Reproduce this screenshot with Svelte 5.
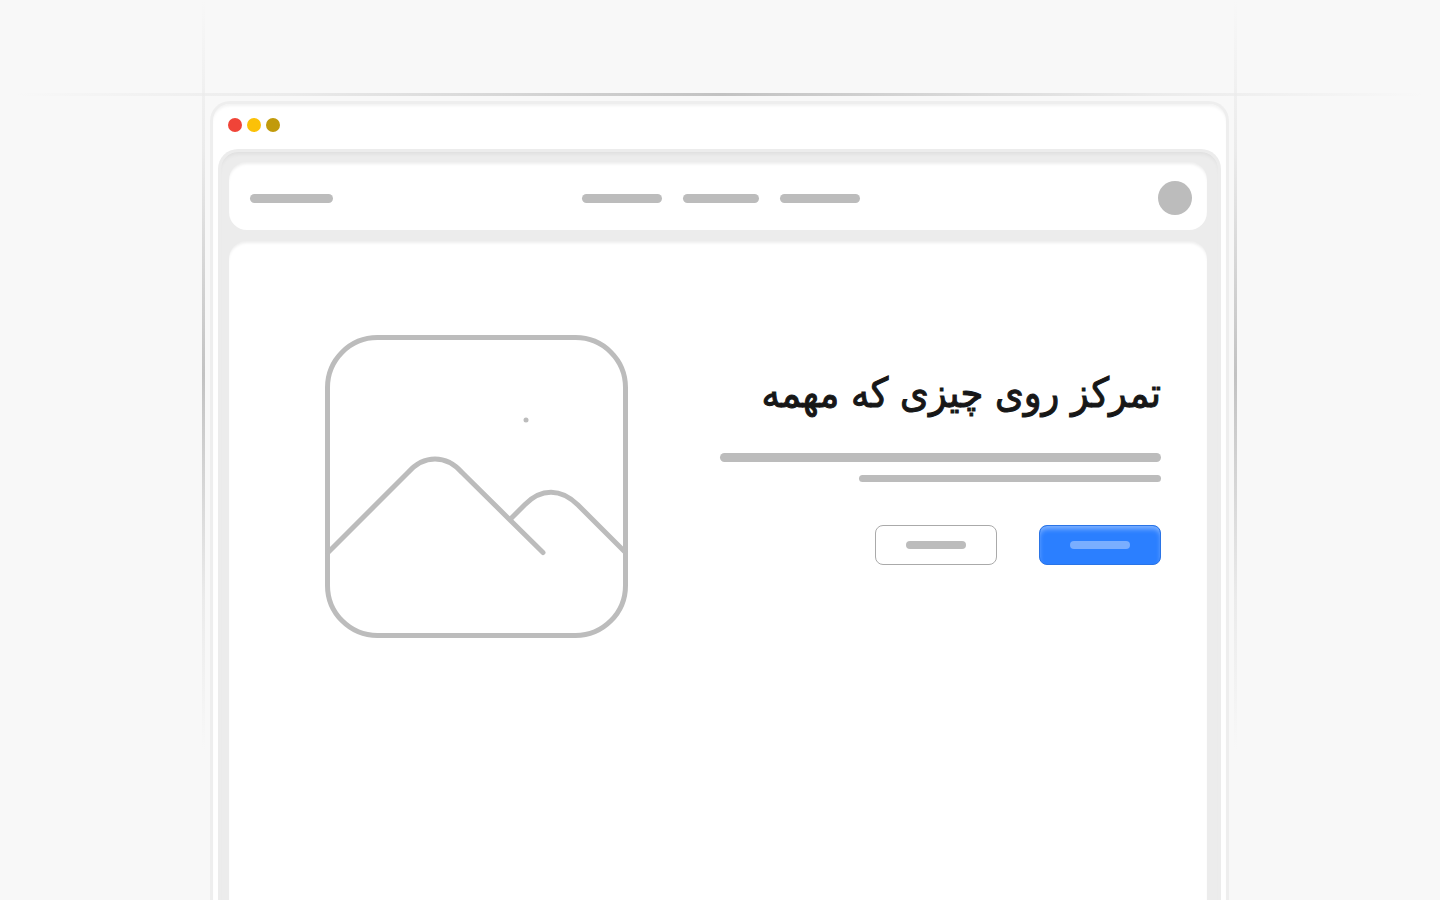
<script lang="ts">
    const dots = ["red", "yellow", "olive"];

    const links = [
        { label: "خانه", size: "wide" },
        { label: "امکانات", size: "narrow" },
        { label: "تماس", size: "wide" }
    ];
</script>

<div class="stage">
    <div class="window">
        <div class="line horizontal"></div>
        <div class="line vertical left"></div>
        <div class="line vertical right"></div>

        <div class="title-bar">
            {#each dots as dot}
                <span class="dot {dot}"></span>
            {/each}
        </div>

        <div class="screen">
            <header class="card navbar">
                <span class="bar logo"></span>
                <nav class="links">
                    {#each links as link}
                        <a class="bar {link.size}" href="#top" aria-label={link.label}></a>
                    {/each}
                </nav>
                <span class="avatar"></span>
            </header>

            <main class="card hero">
                <svg class="picture" viewBox="0 0 303 303" fill="none" stroke="#bcbcbc" stroke-width="5" stroke-linecap="round" stroke-linejoin="round" aria-hidden="true">
                    <rect x="2.5" y="2.5" width="298" height="298" rx="50" />
                    <path d="M3 217.5L83 137.5C99 119.5 121 119.5 137 137.5L218 217.5" />
                    <path d="M185.5 184L200 169.5C216 153 236 153 253 170L299.5 216.5" />
                    <circle cx="201" cy="85" r="2.5" fill="#bcbcbc" stroke="none" />
                </svg>

                <div class="content" dir="rtl">
                    <h1>تمرکز روی چیزی که مهمه</h1>
                    <div class="text">
                        <span class="bar"></span>
                        <span class="bar short"></span>
                    </div>
                    <div class="actions">
                        <button class="btn primary" aria-label="شروع"><span class="bar"></span></button>
                        <button class="btn" aria-label="بیشتر"><span class="bar"></span></button>
                    </div>
                </div>
            </main>
        </div>
    </div>
</div>

<style>
    :global(body) {
        background-color: #f8f8f8;
    }

    .stage {
        display: flex;
        height: 100vh;
        padding: 101px 211px 0 210px;
        box-sizing: border-box;
        overflow: hidden;
        background-color: #f8f8f8;
    }

    .window {
        flex: 1;
        display: flex;
        flex-direction: column;
        min-width: 0;
        position: relative;
        padding: 0 5px;
        border: 3px solid #eeeeee;
        border-bottom: none;
        border-radius: 20px 20px 0 0;
        background-color: #ffffff;
        box-shadow: inset 0 3px 3px -1px rgba(0, 0, 0, 0.05);
    }

    /* guide lines that run past the window edges */
    .line {
        position: absolute;
        pointer-events: none;
    }

    .horizontal {
        top: -11px;
        left: 50%;
        width: 100vw;
        height: 3px;
        transform: translateX(-50%);
        background: linear-gradient(90deg, transparent 1%, #ebebeb 20%, #c2c2c2 50%, #ebebeb 80%, transparent 99%);
    }

    .vertical {
        top: -104px;
        width: 3px;
        height: 750px;
        background: linear-gradient(180deg, transparent, #ebebeb 20%, #c2c2c2 50%, #ebebeb 80%, transparent);
    }

    .left {
        left: -11px;
    }

    .right {
        right: -11px;
    }

    .title-bar {
        display: flex;
        gap: 5px;
        padding: 14px 10px 17px;
    }

    .dot {
        width: 14px;
        height: 14px;
        border-radius: 50%;
    }

    .red {
        background-color: #f04438;
    }

    .yellow {
        background-color: #fbc108;
    }

    .olive {
        background-color: #c19a0b;
    }

    .screen {
        flex: 1;
        display: flex;
        flex-direction: column;
        gap: 11px;
        padding: 10px 11px 0 8px;
        border: 3px solid #ececec;
        border-bottom: none;
        border-radius: 20px 20px 0 0;
        background-color: #ececec;
        box-shadow: inset 0 4px 4px -2px rgba(0, 0, 0, 0.06);
    }

    .card {
        background-color: #ffffff;
        border-radius: 18px;
        box-shadow: inset 0 3px 3px -1px rgba(0, 0, 0, 0.07);
    }

    .navbar {
        display: grid;
        grid-template-columns: 1fr auto 1fr;
        align-items: center;
        height: 68px;
        padding: 4px 15px 0 21px;
        box-sizing: border-box;
    }

    .bar {
        display: block;
        height: 9px;
        border-radius: 5px;
        background-color: #bcbcbc;
    }

    .logo {
        width: 83px;
    }

    .links {
        display: flex;
        gap: 21px;
    }

    .wide {
        width: 80px;
    }

    .narrow {
        width: 76px;
    }

    .avatar {
        justify-self: end;
        width: 34px;
        height: 34px;
        border-radius: 50%;
        background-color: #bcbcbc;
    }

    .hero {
        flex: 1;
        display: flex;
        align-items: flex-start;
        justify-content: space-between;
        padding: 94px 46px 0 96px;
        border-radius: 18px 18px 0 0;
    }

    .picture {
        width: 303px;
        flex-shrink: 0;
    }

    .content {
        width: 441px;
        padding-top: 28px;
    }

    h1 {
        margin: 0;
        font-family: "DejaVu Sans Condensed", "DejaVu Sans", sans-serif;
        font-size: 41px;
        line-height: 60px;
        font-weight: 400;
        color: #171717;
        white-space: nowrap;
        -webkit-text-stroke: 1px #171717;
    }

    .text {
        display: flex;
        flex-direction: column;
        gap: 13px;
        padding: 30px 0 43px;
    }

    .short {
        width: 302px;
        height: 7px;
    }

    .actions {
        display: flex;
        gap: 42px;
    }

    .btn {
        display: flex;
        align-items: center;
        justify-content: center;
        width: 122px;
        height: 40px;
        padding: 0;
        border: 1px solid #aaaaaa;
        border-radius: 8px;
        background-color: #ffffff;
        cursor: pointer;
    }

    .btn .bar {
        width: 60px;
        height: 8px;
    }

    .primary {
        border-color: #2a74e6;
        background-color: #2b7fff;
        box-shadow: inset 0 4px 5px -1px rgba(255, 255, 255, 0.4);
    }

    .primary .bar {
        background-color: #7aaeff;
    }
</style>
